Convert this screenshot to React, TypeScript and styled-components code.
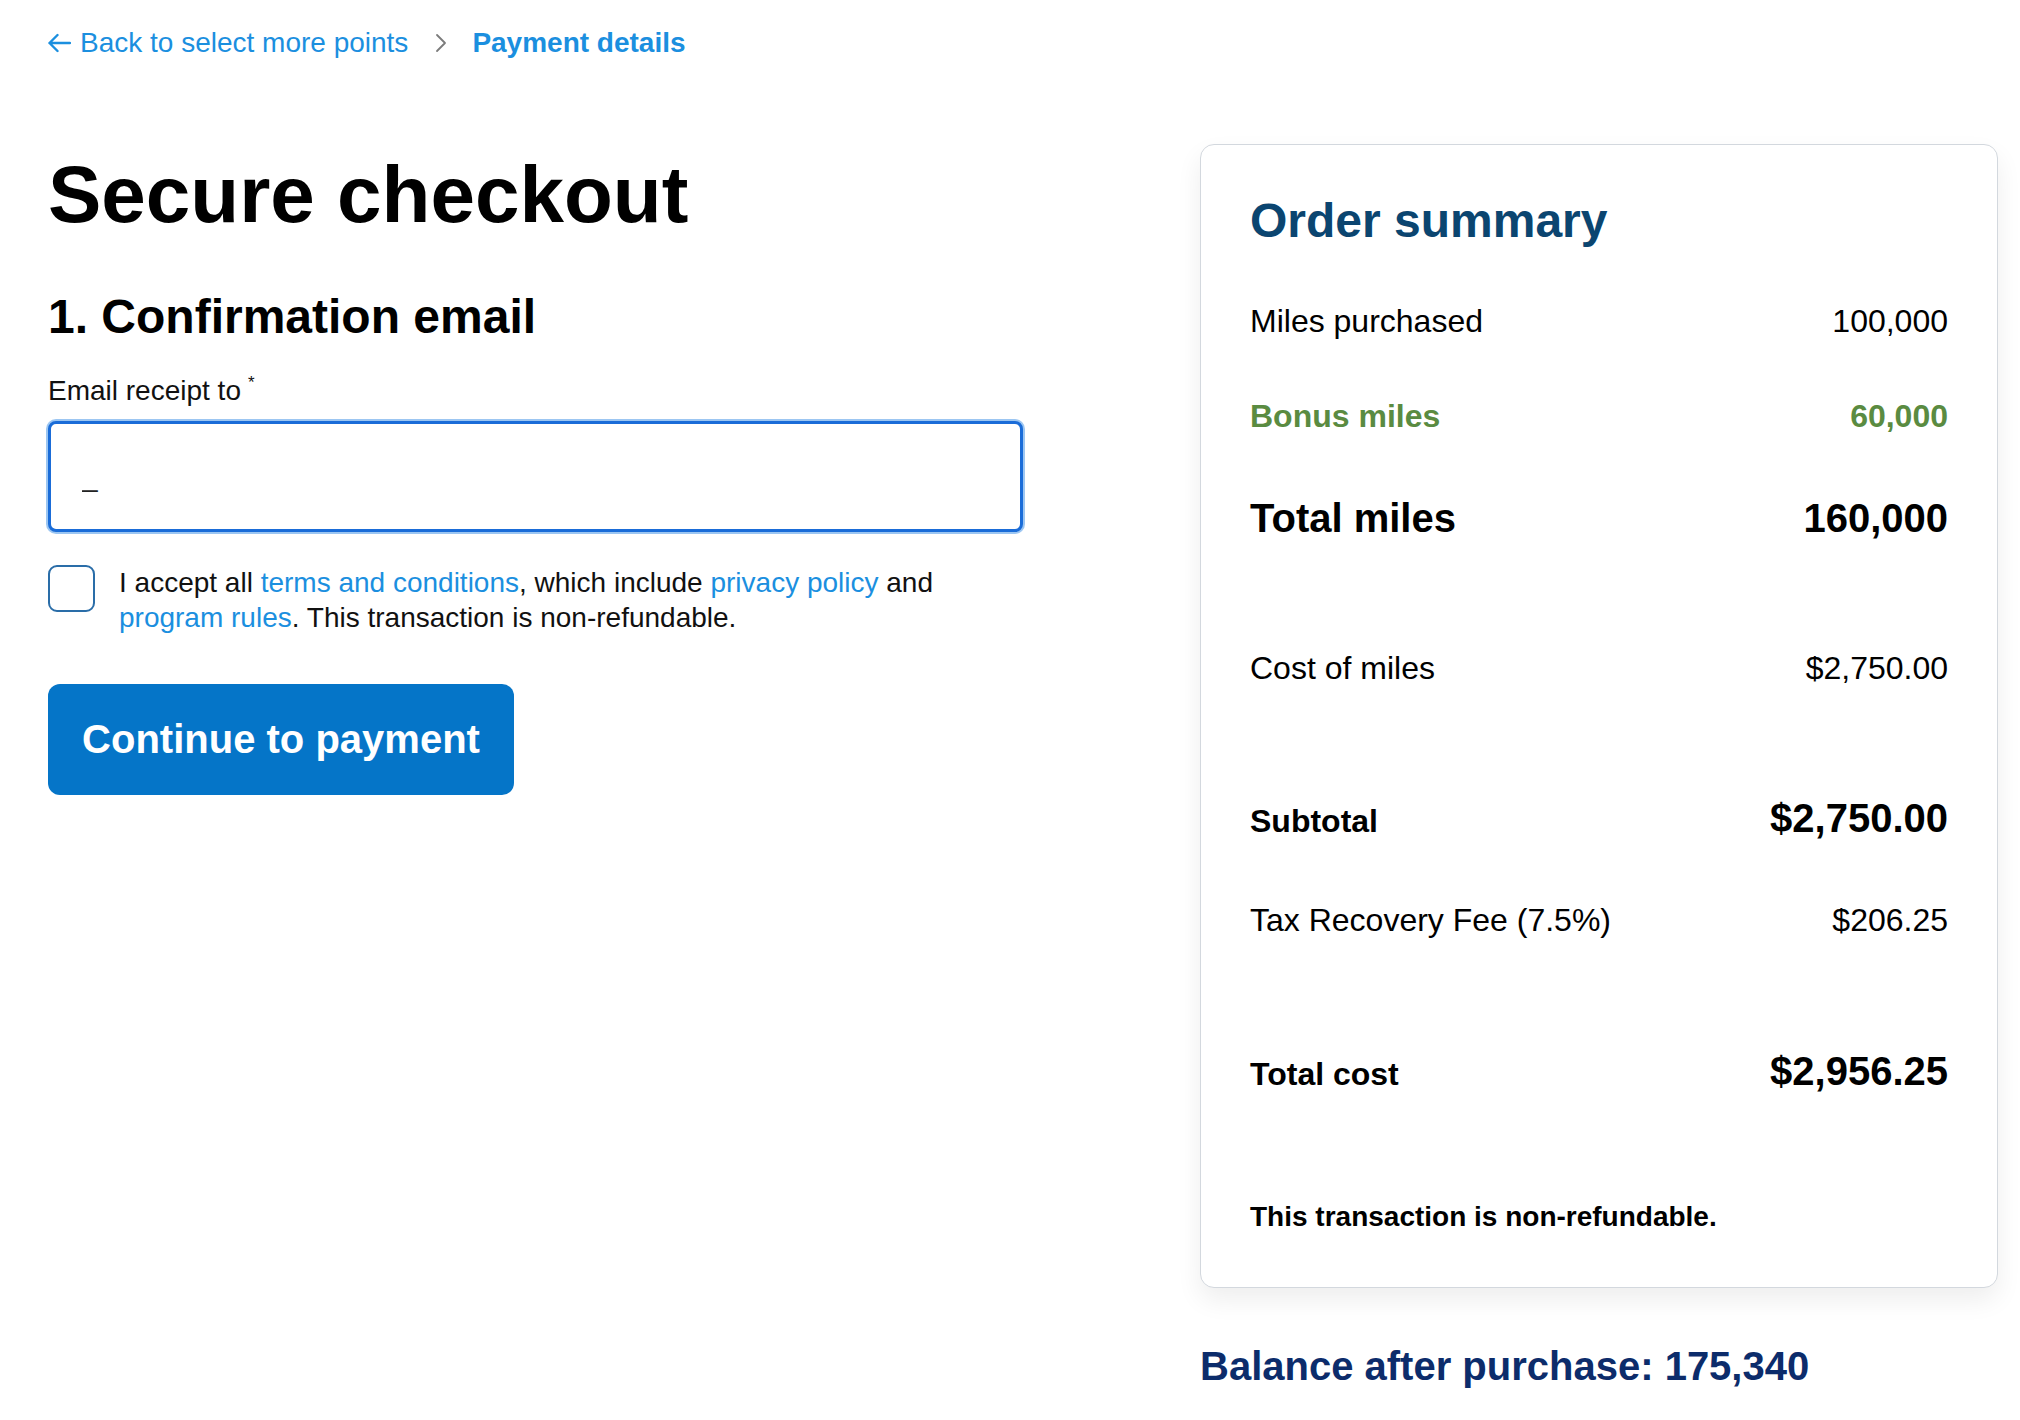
import React from "react";
import styled, { createGlobalStyle } from "styled-components";

const GlobalStyle = createGlobalStyle`
  html, body { margin: 0; padding: 0; background: #ffffff; }
  body {
    font-family: "Liberation Sans", Arial, Helvetica, sans-serif;
    color: #000000;
    -webkit-font-smoothing: antialiased;
  }
  *, *::before, *::after { box-sizing: border-box; }
`;

const Page = styled.div`
  width: 2020px;
  min-height: 1420px;
  padding: 26px 22px 0 48px;
`;

const Breadcrumb = styled.nav`
  display: flex;
  align-items: center;
  height: 34px;
  font-size: 28px;
  line-height: 34px;
`;

const BackLink = styled.a`
  display: flex;
  align-items: center;
  gap: 9px;
  margin-left: -1px;
  color: #1b8fdf;
  text-decoration: none;
`;

const Crumb = styled.span`
  display: flex;
  align-items: center;
  margin: 0 25px 0 27px;
`;

const Current = styled.span`
  color: #1b8fdf;
  font-weight: 700;
`;

const Layout = styled.div`
  display: grid;
  grid-template-columns: 975px 798px;
  column-gap: 177px;
  align-items: start;
  margin-top: 84px;
`;

const Form = styled.section`
  display: flex;
  flex-direction: column;
  align-items: flex-start;
`;

const Title = styled.h1`
  margin: 3px 0 0;
  font-size: 80px;
  line-height: 96px;
  font-weight: 700;
  color: #000;
`;

const StepTitle = styled.h2`
  margin: 45px 0 0;
  font-size: 48px;
  line-height: 58px;
  font-weight: 700;
  color: #000;
`;

const Label = styled.label`
  margin-top: 20px;
  font-size: 28px;
  line-height: 34px;
  color: #111;
`;

const Required = styled.span`
  display: inline-block;
  margin-left: 7px;
  font-size: 17px;
  vertical-align: 12px;
`;

const EmailInput = styled.input`
  margin-top: 13px;
  width: 975px;
  height: 111px;
  padding: 0 31px;
  border: 3px solid #1a6cd8;
  border-radius: 8px;
  box-shadow: 0 0 0 2px #9cc6f2;
  outline: none;
  font-family: inherit;
  font-size: 28px;
  color: #222;
  background: #fff;
`;

const Consent = styled.div`
  display: flex;
  align-items: flex-start;
  gap: 24px;
  margin-top: 33px;
  width: 975px;
`;

const Checkbox = styled.span`
  flex-shrink: 0;
  width: 47px;
  height: 47px;
  border: 2px solid #2a6da8;
  border-radius: 9px;
  background: #fff;
`;

const ConsentText = styled.p`
  margin: 0;
  font-size: 28px;
  line-height: 35px;
  color: #111;
`;

const TextLink = styled.a`
  color: #1b8fdf;
  text-decoration: none;
`;

const PrimaryButton = styled.button`
  margin-top: 49px;
  width: 466px;
  height: 111px;
  border: none;
  border-radius: 12px;
  background: #0575c8;
  color: #ffffff;
  font-family: inherit;
  font-size: 40px;
  font-weight: 700;
  cursor: pointer;
`;

const Aside = styled.aside`
  display: flex;
  flex-direction: column;
`;

const Card = styled.div`
  border: 1px solid #d3d8de;
  border-radius: 14px;
  background: #fff;
  padding: 47px 49px 46px 49px;
  box-shadow: 0 12px 26px rgba(0, 0, 0, 0.07);
`;

const CardTitle = styled.h2`
  margin: 0;
  font-size: 48px;
  line-height: 58px;
  font-weight: 700;
  color: #0b4570;
`;

const Row = styled.div<{ $space: number }>`
  display: flex;
  justify-content: space-between;
  align-items: baseline;
  margin-top: ${(p) => p.$space}px;
  line-height: 48px;
`;

const Cell = styled.span<{ $size: number; $bold?: boolean; $tone?: "green" }>`
  font-size: ${(p) => p.$size}px;
  font-weight: ${(p) => (p.$bold ? 700 : 400)};
  color: ${(p) => (p.$tone === "green" ? "#5a8b41" : "#000")};
`;

const Note = styled.p`
  margin: 95px 0 0;
  font-size: 28px;
  line-height: 48px;
  font-weight: 700;
  color: #000;
`;

const Balance = styled.p`
  margin: 54px 0 0;
  font-size: 40px;
  line-height: 48px;
  font-weight: 700;
  color: #0c2c6b;
`;

type Line = {
  label: string;
  value: string;
  space: number;
  labelSize: number;
  valueSize: number;
  bold?: boolean;
  tone?: "green";
};

const lines: Line[] = [
  { label: "Miles purchased", value: "100,000", space: 47, labelSize: 32, valueSize: 32 },
  { label: "Bonus miles", value: "60,000", space: 47, labelSize: 32, valueSize: 32, bold: true, tone: "green" },
  { label: "Total miles", value: "160,000", space: 54, labelSize: 40, valueSize: 40, bold: true },
  { label: "Cost of miles", value: "$2,750.00", space: 102, labelSize: 32, valueSize: 32 },
  { label: "Subtotal", value: "$2,750.00", space: 102, labelSize: 32, valueSize: 40, bold: true },
  { label: "Tax Recovery Fee (7.5%)", value: "$206.25", space: 51, labelSize: 32, valueSize: 32 },
  { label: "Total cost", value: "$2,956.25", space: 103, labelSize: 32, valueSize: 40, bold: true },
];

const ArrowLeft = () => (
  <svg width="24" height="20" viewBox="0 0 24 20" fill="none">
    <path d="M23 10H2.5M10.5 2L2.5 10L10.5 18" stroke="#1b8fdf" strokeWidth="2.4" strokeLinecap="round" strokeLinejoin="round" />
  </svg>
);

const Chevron = () => (
  <svg width="12" height="20" viewBox="0 0 12 20" fill="none">
    <path d="M2 2L10 10L2 18" stroke="#7b7b7b" strokeWidth="1.8" strokeLinecap="round" strokeLinejoin="round" />
  </svg>
);

export default function App() {
  return (
    <>
      <GlobalStyle />
      <Page>
        <Breadcrumb>
          <BackLink href="#">
            <ArrowLeft />
            Back to select more points
          </BackLink>
          <Crumb>
            <Chevron />
          </Crumb>
          <Current>Payment details</Current>
        </Breadcrumb>

        <Layout>
          <Form>
            <Title>Secure checkout</Title>
            <StepTitle>1. Confirmation email</StepTitle>
            <Label htmlFor="email">
              Email receipt to<Required>*</Required>
            </Label>
            <EmailInput id="email" type="text" value="_" readOnly />
            <Consent>
              <Checkbox role="checkbox" aria-checked="false" />
              <ConsentText>
                I accept all <TextLink href="#">terms and conditions</TextLink>, which include{" "}
                <TextLink href="#">privacy policy</TextLink> and{" "}
                <TextLink href="#">program rules</TextLink>. This transaction is non-refundable.
              </ConsentText>
            </Consent>
            <PrimaryButton type="button">Continue to payment</PrimaryButton>
          </Form>

          <Aside>
            <Card>
              <CardTitle>Order summary</CardTitle>
              {lines.map((l) => (
                <Row key={l.label} $space={l.space}>
                  <Cell $size={l.labelSize} $bold={l.bold} $tone={l.tone}>
                    {l.label}
                  </Cell>
                  <Cell $size={l.valueSize} $bold={l.bold} $tone={l.tone}>
                    {l.value}
                  </Cell>
                </Row>
              ))}
              <Note>This transaction is non-refundable.</Note>
            </Card>
            <Balance>Balance after purchase: 175,340</Balance>
          </Aside>
        </Layout>
      </Page>
    </>
  );
}
